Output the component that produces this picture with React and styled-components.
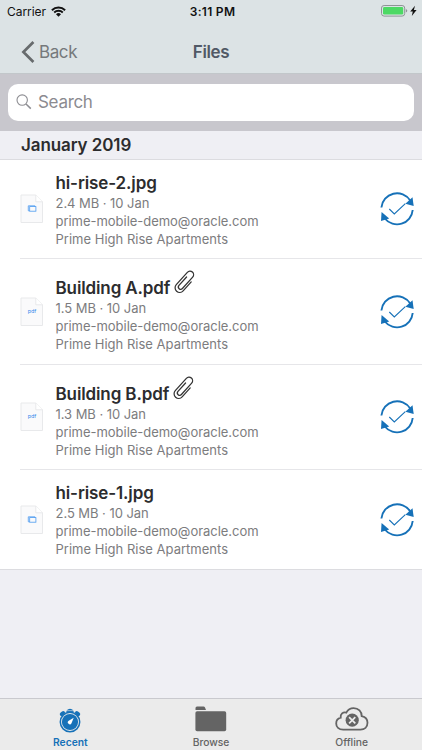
import React from 'react';
import styled, { createGlobalStyle } from 'styled-components';

const files = [
  { name: 'hi-rise-2.jpg', type: 'image', size: '2.4 MB', height: 98, pad: 12 },
  { name: 'Building A.pdf', type: 'pdf', size: '1.5 MB', height: 106, pad: 18, clip: true },
  { name: 'Building B.pdf', type: 'pdf', size: '1.3 MB', height: 105, pad: 18, clip: true },
  { name: 'hi-rise-1.jpg', type: 'image', size: '2.5 MB', height: 100, pad: 12 },
];

const WifiIcon = () => (
  <svg width="15" height="11" viewBox="0 0 15 11">
    <path d="M0.9 4.2a9.6 9.6 0 0 1 13.2 0" fill="none" stroke="#111" strokeWidth="2" />
    <path d="M3.2 6.5a6.3 6.3 0 0 1 8.6 0" fill="none" stroke="#111" strokeWidth="1.9" />
    <path d="M7.5 10.8 5 8.3a3.6 3.6 0 0 1 5 0z" fill="#111" />
  </svg>
);

const BatteryIcon = () => (
  <svg width="37" height="12" viewBox="0 0 37 12">
    <rect x="0.5" y="0.5" width="23.2" height="10.6" rx="2.6" fill="none" stroke="#8e9495" />
    <rect x="2" y="2" width="20.2" height="7.6" rx="1.4" fill="#4cd964" />
    <path d="M24.8 4v3.6q1.5-.5 1.5-1.8t-1.5-1.8z" fill="#8e9495" />
    <path d="M34 .8 29.2 6.5h2.6L30.8 11l4.8-5.9h-2.7z" fill="#111" />
  </svg>
);

const BackIcon = () => (
  <svg width="14" height="22" viewBox="0 0 14 22">
    <path d="M12.4 1 2.4 11l10 10" fill="none" stroke="#676b6d" strokeWidth="2.7" />
  </svg>
);

const SearchIcon = () => (
  <svg width="16" height="16" viewBox="0 0 16 16" fill="none" stroke="#8e8e93">
    <circle cx="6.2" cy="6.1" r="5.2" strokeWidth="1.1" />
    <path d="m10 10 4.8 4.6" strokeWidth="1.5" />
  </svg>
);

const PageIcon = ({ type }) => (
  <svg width="24" height="30" viewBox="0 0 24 30">
    <path d="M1 1h14.8l6.7 6.8v20.7H1z" fill="#fafafb" stroke="#e8e9eb" />
    <path d="M15.8 1v6.8h6.7" fill="#fff" stroke="#e8e9eb" />
    {type === 'pdf' ? (
      <text x="12" y="16.4" textAnchor="middle" fontFamily="Inter, sans-serif" fontSize="5.4" fill="#2f88ec">
        pdf
      </text>
    ) : (
      <g fill="none" stroke="#4c9bf0" strokeWidth="0.8">
        <path d="M9.7 16.8H8.3v-5h6.6v1" />
        <rect x="9.7" y="12.6" width="6.2" height="4.6" />
      </g>
    )}
  </svg>
);

const ClipIcon = () => (
  <svg width="22" height="24" viewBox="0 0 22 24">
    <path
      d="M8.8 8.5V20a4.4 4.4 0 0 1-8.8 0V4.2a3.4 3.4 0 0 1 6.8 0v14.6a2.2 2.2 0 0 1-4.4 0V8"
      transform="translate(10.9 12) rotate(42) scale(1.05) translate(-4.4 -12.6)"
      fill="none"
      stroke="#333"
      strokeWidth="1.2"
      strokeLinecap="round"
    />
  </svg>
);

const SyncIcon = () => (
  <svg width="36" height="36" viewBox="0 0 36 36">
    <g fill="none" stroke="#1671b8">
      <path d="M2.4 16.5A15.7 15.7 0 0 1 31.2 9.4" strokeWidth="1.9" />
      <path d="M33.7 19A15.7 15.7 0 0 1 5.8 27.5" strokeWidth="1.9" />
      <path d="m10.3 18 5 5L26.3 12.6" strokeWidth="1.1" />
    </g>
    <path d="M26.4 12.8 33.5 6.2l1.2 8.9z" fill="#1671b8" />
    <path d="M2.6 21 10.2 27.4 2 30z" fill="#1671b8" />
  </svg>
);

const RecentIcon = () => (
  <svg width="22" height="28" viewBox="0 0 22 28">
    <circle cx="11" cy="17" r="9.7" fill="none" stroke="#1671b8" strokeWidth="1.5" />
    <circle cx="11" cy="17" r="8.1" fill="#1671b8" />
    <path d="M7.4 5.6Q11 2.1 14.6 5.6z" fill="#1671b8" />
    <path d="M7.4 6.5h7.2" stroke="#1671b8" strokeWidth="0.9" />
    <path d="m2.6 9.2 1.6-1.4M19.4 9.2l-1.6-1.4" stroke="#1671b8" strokeWidth="3.6" strokeLinecap="round" />
    <path d="m14.7 12.7-2.2 5.5a1.9 1.9 0 1 1-2.8-2.4z" fill="#fff" />
  </svg>
);

const FolderIcon = () => (
  <svg width="32" height="26" viewBox="0 0 32 26" fill="#646464">
    <path d="M.5 4V2Q.5.5 2 .5h6.5q1.1 0 1.5 1L11 4z" />
    <rect x=".4" y="5.2" width="30.8" height="20" rx="1.7" />
  </svg>
);

const CloudIcon = () => (
  <svg width="34" height="24" viewBox="0 0 34 24">
    <path
      d="M8.2 22.6C3.7 22.6 1.2 20 1.2 16.4c0-3 1.7-5 4.5-5.7C5.2 7 8 4.7 11.3 5.6 13 2.5 15.7 1.2 18.6 1.2c4.8 0 8.2 3.4 8.1 8 3.6.8 5.8 3.3 5.8 6.6 0 4.3-3 6.8-7 6.8z"
      fill="none"
      stroke="#646464"
      strokeWidth="1.8"
    />
    <circle cx="17.2" cy="13.2" r="6.6" fill="#646464" />
    <path d="m14.1 10.1 6.2 6.2M20.3 10.1l-6.2 6.2" stroke="#ebebeb" strokeWidth="1.7" />
  </svg>
);

const App = () => (
  <>
    <GlobalStyle />
    <Screen>
      <StatusBar>
        <Carrier>
          Carrier
          <WifiIcon />
        </Carrier>
        <Clock>3:11 PM</Clock>
        <Battery>
          <BatteryIcon />
        </Battery>
      </StatusBar>
      <NavBar>
        <BackButton>
          <BackIcon />
          Back
        </BackButton>
        <Title>Files</Title>
      </NavBar>
      <SearchArea>
        <SearchField>
          <SearchIcon />
          <span>Search</span>
        </SearchField>
      </SearchArea>
      <SectionHeader>January 2019</SectionHeader>
      <List>
        {files.map((file) => (
          <Row key={file.name} $height={file.height}>
            <PageIcon type={file.type} />
            <Details $pad={file.pad}>
              <FileName>
                {file.name}
                {file.clip && <ClipIcon />}
              </FileName>
              <Meta $spacing="-0.05px">{file.size} · 10 Jan</Meta>
              <Meta $spacing="-0.03px">prime-mobile-demo@oracle.com</Meta>
              <Meta $spacing="0.01px">Prime High Rise Apartments</Meta>
            </Details>
            <SyncIcon />
          </Row>
        ))}
      </List>
      <TabBar>
        <Tab $active>
          <TabIcon>
            <RecentIcon />
          </TabIcon>
          Recent
        </Tab>
        <Tab>
          <TabIcon>
            <FolderIcon />
          </TabIcon>
          Browse
        </Tab>
        <Tab>
          <TabIcon>
            <CloudIcon />
          </TabIcon>
          Offline
        </Tab>
      </TabBar>
    </Screen>
  </>
);

const GlobalStyle = createGlobalStyle`
  * {
    box-sizing: border-box;
  }

  body {
    margin: 0;
    font-family: Inter, 'Liberation Sans', sans-serif;
  }

  svg {
    display: block;
    flex-shrink: 0;
  }
`;

const Screen = styled.div`
  display: flex;
  flex-direction: column;
  width: 422px;
  height: 750px;
  overflow: hidden;
  background-color: #efeff4;
`;

const StatusBar = styled.div`
  display: grid;
  grid-template-columns: 1fr auto 1fr;
  align-items: center;
  height: 22px;
  padding: 0 4px 0 7px;
  background-color: #dce3e5;
  color: #111;
  font-size: 12px;
`;

const Carrier = styled.div`
  display: flex;
  align-items: center;
  gap: 5px;
  letter-spacing: -0.05px;
`;

const Clock = styled.div`
  font-weight: 600;
  letter-spacing: 0.3px;
`;

const Battery = styled.div`
  display: flex;
  justify-content: flex-end;
`;

const NavBar = styled.header`
  display: grid;
  grid-template-columns: 1fr auto 1fr;
  align-items: center;
  height: 52px;
  padding: 8px 21px 0;
  background-color: #dce3e5;
  border-bottom: 1px solid #c2c7ca;
`;

const BackButton = styled.div`
  display: flex;
  align-items: center;
  gap: 4px;
  color: #75797b;
  font-size: 17px;
  letter-spacing: -0.4px;
`;

const Title = styled.h1`
  margin: 0;
  color: #515966;
  font-size: 17px;
  font-weight: 600;
  letter-spacing: -0.4px;
`;

const SearchArea = styled.div`
  height: 57px;
  padding: 10px 8px 0;
  background-color: #c8c7cd;
`;

const SearchField = styled.div`
  display: flex;
  align-items: center;
  gap: 6px;
  height: 37px;
  padding: 0 0 2px 8px;
  border-radius: 10px;
  background-color: #fff;
  color: #8b8b90;
  font-size: 17px;
  letter-spacing: -0.3px;
`;

const SectionHeader = styled.h2`
  height: 29px;
  margin: 0;
  padding-left: 21px;
  border-bottom: 1px solid #dcdce0;
  color: #2c2c2e;
  font-size: 17px;
  font-weight: 600;
  letter-spacing: -0.1px;
  line-height: 29px;
`;

const List = styled.div`
  background-color: #fff;
  border-bottom: 1px solid #dcdce0;
`;

const Row = styled.div`
  display: flex;
  align-items: center;
  gap: 11.5px;
  height: ${({ $height }) => $height}px;
  margin-left: 20px;
  padding-right: 7px;

  & + & {
    border-top: 1px solid #e6e6e9;
  }
`;

const Details = styled.div`
  flex: 1;
  align-self: stretch;
  padding-top: ${({ $pad }) => $pad}px;
`;

const FileName = styled.div`
  display: flex;
  align-items: center;
  gap: 4px;
  height: 22px;
  color: #2c2c2e;
  font-size: 17px;
  font-weight: 600;
  letter-spacing: -0.12px;

  svg {
    margin-top: -12px;
  }
`;

const Meta = styled.div`
  color: #7c7c7e;
  font-size: 13px;
  line-height: 18px;
  letter-spacing: ${({ $spacing }) => $spacing};
`;

const TabBar = styled.nav`
  display: grid;
  grid-template-columns: repeat(3, 1fr);
  height: 52px;
  margin-top: auto;
  border-top: 1px solid #c9c9ce;
  background-color: #ebebeb;
`;

const Tab = styled.div`
  display: flex;
  flex-direction: column;
  align-items: center;
  color: ${({ $active }) => ($active ? '#1671b8' : '#646464')};
  font-size: 10.3px;
  font-weight: ${({ $active }) => ($active ? 600 : 500)};
  line-height: 13px;
`;

const TabIcon = styled.div`
  display: flex;
  align-items: center;
  height: 37px;
  padding-top: 2px;
`;

export default App;
